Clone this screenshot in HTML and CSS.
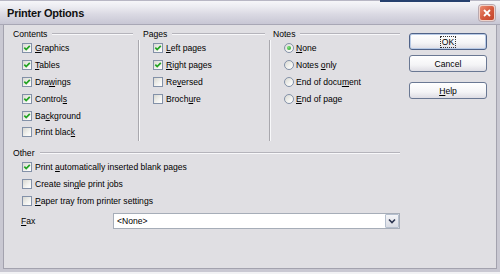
FILE: index.html
```html
<!DOCTYPE html>
<html>
<head>
<meta charset="utf-8">
<title>Printer Options</title>
<link rel="stylesheet" href="styles.css">
</head>
<body>
<div class="window">
  <div class="behind"></div>
  <div class="titlebar">
    <span class="title">Printer Options</span>
    <span class="close"><svg viewBox="0 0 10 10" width="10" height="10"><path d="M2 2 L8 8 M8 2 L2 8"/></svg></span>
  </div>
  <div class="body">
    <div class="main">
      <div class="top">
        <div class="group col1">
          <div class="ghead"><span class="glabel">Contents</span><i class="hline"></i></div>
          <div class="row"><span class="cb on"><svg viewBox="0 0 8 8"><path d="M1.3 3.6 L3.2 5.6 L6.8 1.8"/></svg></span><span class="lbl"><u>G</u>raphics</span></div>
          <div class="row"><span class="cb on"><svg viewBox="0 0 8 8"><path d="M1.3 3.6 L3.2 5.6 L6.8 1.8"/></svg></span><span class="lbl"><u>T</u>ables</span></div>
          <div class="row"><span class="cb on"><svg viewBox="0 0 8 8"><path d="M1.3 3.6 L3.2 5.6 L6.8 1.8"/></svg></span><span class="lbl">Dra<u>w</u>ings</span></div>
          <div class="row"><span class="cb on"><svg viewBox="0 0 8 8"><path d="M1.3 3.6 L3.2 5.6 L6.8 1.8"/></svg></span><span class="lbl">Control<u>s</u></span></div>
          <div class="row"><span class="cb on"><svg viewBox="0 0 8 8"><path d="M1.3 3.6 L3.2 5.6 L6.8 1.8"/></svg></span><span class="lbl">Ba<u>c</u>kground</span></div>
          <div class="row"><span class="cb"></span><span class="lbl">Print blac<u>k</u></span></div>
        </div>
        <div class="vsep"></div>
        <div class="group col2">
          <div class="ghead"><span class="glabel">Pages</span><i class="hline"></i></div>
          <div class="row"><span class="cb on"><svg viewBox="0 0 8 8"><path d="M1.3 3.6 L3.2 5.6 L6.8 1.8"/></svg></span><span class="lbl"><u>L</u>eft pages</span></div>
          <div class="row"><span class="cb on"><svg viewBox="0 0 8 8"><path d="M1.3 3.6 L3.2 5.6 L6.8 1.8"/></svg></span><span class="lbl"><u>R</u>ight pages</span></div>
          <div class="row"><span class="cb"></span><span class="lbl">Re<u>v</u>ersed</span></div>
          <div class="row"><span class="cb"></span><span class="lbl">Broch<u>u</u>re</span></div>
        </div>
        <div class="vsep"></div>
        <div class="group col3">
          <div class="ghead"><span class="glabel">Notes</span><i class="hline"></i></div>
          <div class="row"><span class="rb on"></span><span class="lbl"><u>N</u>one</span></div>
          <div class="row"><span class="rb"></span><span class="lbl">Notes <u>o</u>nly</span></div>
          <div class="row"><span class="rb"></span><span class="lbl">End of docu<u>m</u>ent</span></div>
          <div class="row"><span class="rb"></span><span class="lbl"><u>E</u>nd of page</span></div>
        </div>
      </div>
      <div class="group other">
        <div class="ghead"><span class="glabel">Other</span><i class="hline"></i></div>
        <div class="row"><span class="cb on"><svg viewBox="0 0 8 8"><path d="M1.3 3.6 L3.2 5.6 L6.8 1.8"/></svg></span><span class="lbl">Print <u>a</u>utomatically inserted blank pages</span></div>
        <div class="row"><span class="cb"></span><span class="lbl">Create sin<u>g</u>le print jobs</span></div>
        <div class="row"><span class="cb"></span><span class="lbl"><u>P</u>aper tray from printer settings</span></div>
      </div>
      <div class="fax">
        <span class="faxlbl"><u>F</u>ax</span>
        <div class="combo">
          <span class="combotext">&lt;None&gt;</span>
          <span class="drop"><svg viewBox="0 0 8 6" width="8" height="6"><path d="M1 1.5 L4 4.5 L7 1.5"/></svg></span>
        </div>
      </div>
    </div>
    <div class="buttons">
      <div class="btn default"><span class="focus">OK</span></div>
      <div class="btn">Cancel</div>
      <div class="btn help"><span><u>H</u>elp</span></div>
    </div>
  </div>
</div>
</body>
</html>
```
FILE: styles.css
```css
html, body {
  margin: 0;
  padding: 0;
}
body {
  width: 500px;
  height: 274px;
  overflow: hidden;
  background: #f2f2f4;
  font-family: "Liberation Sans", Arial, sans-serif;
  font-size: 8.6px;
  color: #000;
}
.window {
  position: relative;
  width: 500px;
  height: 272px;
  display: flex;
  flex-direction: column;
}
.behind {
  position: absolute;
  top: 0;
  left: 380px;
  width: 90px;
  height: 2px;
  background: #26406e;
}
.titlebar {
  height: 25px;
  box-sizing: border-box;
  display: flex;
  align-items: center;
  justify-content: space-between;
  padding: 0 5px 0 7px;
  background: linear-gradient(#f6f6f9 0%, #ececf1 25%, #d9d8e2 60%, #c8c7d4 100%);
  border-top: 1px solid #b8b7c4;
  border-bottom: 1px solid #a8a7b5;
}
.title {
  font-weight: bold;
  font-size: 11px;
  letter-spacing: -0.2px;
  color: #101010;
}
.close {
  width: 16px;
  height: 16px;
  box-sizing: border-box;
  border: 1px solid #f1d2c9;
  border-radius: 3px;
  background: linear-gradient(135deg, #ea8c72 0%, #d4583c 55%, #c2452c 100%);
  display: flex;
  align-items: center;
  justify-content: center;
  box-shadow: 0 0 0 1px #b8a9b0;
}
.close svg path {
  stroke: #fff;
  stroke-width: 1.8;
  fill: none;
}
.body {
  flex: 1;
  display: flex;
  background: #e0dfe3;
  border-style: solid;
  border-width: 0 3px 3px 3px;
  border-color: #c9c8d2;
  box-shadow: inset 1px 0 0 #a3a2ae, inset -1px 0 0 #a3a2ae, inset 0 -1px 0 #a3a2ae;
}
.main {
  width: 387px;
  padding-left: 10px;
  padding-top: 2px;
  display: flex;
  flex-direction: column;
}
.top {
  display: flex;
  padding-bottom: 3px;
}
.group {
  display: flex;
  flex-direction: column;
}
.col1 { width: 120px; }
.col2 { width: 122px; }
.col3 { width: 127px; }
.vsep {
  width: 1px;
  margin-top: 13px;
  background: #a9a8ae;
  box-shadow: 1px 0 0 #f8f8fa;
}
.col1 + .vsep { margin-left: 5px; margin-right: 4px; }
.col2 + .vsep { margin-left: 4px; margin-right: 3px; }
.ghead {
  height: 13px;
  display: flex;
  align-items: center;
}
.glabel {
  padding-right: 5px;
}
.hline {
  flex: 1;
  height: 1px;
  background: #b5b4bb;
  box-shadow: 0 1px 0 #f8f8fa;
}
.row {
  height: 16.8px;
  display: flex;
  align-items: center;
  padding-left: 9px;
}
.col2 .row { padding-left: 10px; }
.col3 .row { padding-left: 11px; }
.cb {
  width: 10px;
  height: 10px;
  box-sizing: border-box;
  border: 1px solid #8391a8;
  background: linear-gradient(135deg, #d8d8d2 0%, #f3f3f0 60%, #ffffff 100%);
  display: flex;
  align-items: center;
  justify-content: center;
  margin-right: 3px;
  flex: none;
}
.cb svg {
  width: 8px;
  height: 8px;
}
.cb svg path {
  stroke: #22a322;
  stroke-width: 1.7;
  fill: none;
}
.rb {
  width: 10px;
  height: 10px;
  box-sizing: border-box;
  border: 1px solid #8391a8;
  border-radius: 50%;
  background: linear-gradient(135deg, #d8d8d2 0%, #f3f3f0 60%, #ffffff 100%);
  margin-right: 2px;
  display: flex;
  align-items: center;
  justify-content: center;
  flex: none;
}
.rb.on::after {
  content: "";
  width: 4px;
  height: 4px;
  border-radius: 50%;
  background: radial-gradient(circle at 35% 35%, #7be07b, #1f9c1f);
}
.lbl u, .faxlbl u, .help u {
  text-decoration: underline;
  text-underline-offset: 1px;
}
.other {
  margin-top: 3.2px;
}
.other .ghead {
  height: 12px;
}
.fax {
  margin-top: 3.6px;
  height: 16px;
  display: flex;
  align-items: center;
  padding-left: 8px;
}
.faxlbl {
  width: 92px;
}
.combo {
  flex: 1;
  height: 16px;
  box-sizing: border-box;
  border: 1px solid #a6adb8;
  background: #fff;
  display: flex;
  align-items: center;
  justify-content: space-between;
  padding-left: 3px;
}
.drop {
  width: 14px;
  height: 14px;
  box-sizing: border-box;
  border: 1px solid #b5bfce;
  border-radius: 1px;
  background: linear-gradient(#f4f5f8, #d9dce4);
  display: flex;
  align-items: center;
  justify-content: center;
}
.drop svg path {
  stroke: #2c3550;
  stroke-width: 1.6;
  fill: none;
}
.buttons {
  margin-left: 9px;
  margin-top: 8px;
  width: 78px;
  display: flex;
  flex-direction: column;
}
.btn {
  height: 17px;
  box-sizing: border-box;
  border: 1px solid #6a7893;
  border-radius: 3px;
  background: linear-gradient(#ffffff 0%, #f4f4f6 60%, #dedde4 100%);
  display: flex;
  align-items: center;
  justify-content: center;
}
.btn + .btn {
  margin-top: 5px;
}
.btn.help {
  margin-top: 10px;
}
.btn.default {
  border-color: #4f6288;
  box-shadow: inset 0 0 0 1px #b9cbe6;
}
.focus {
  border: 1px dotted #333;
  padding: 0 1px;
  line-height: 10px;
}
```
